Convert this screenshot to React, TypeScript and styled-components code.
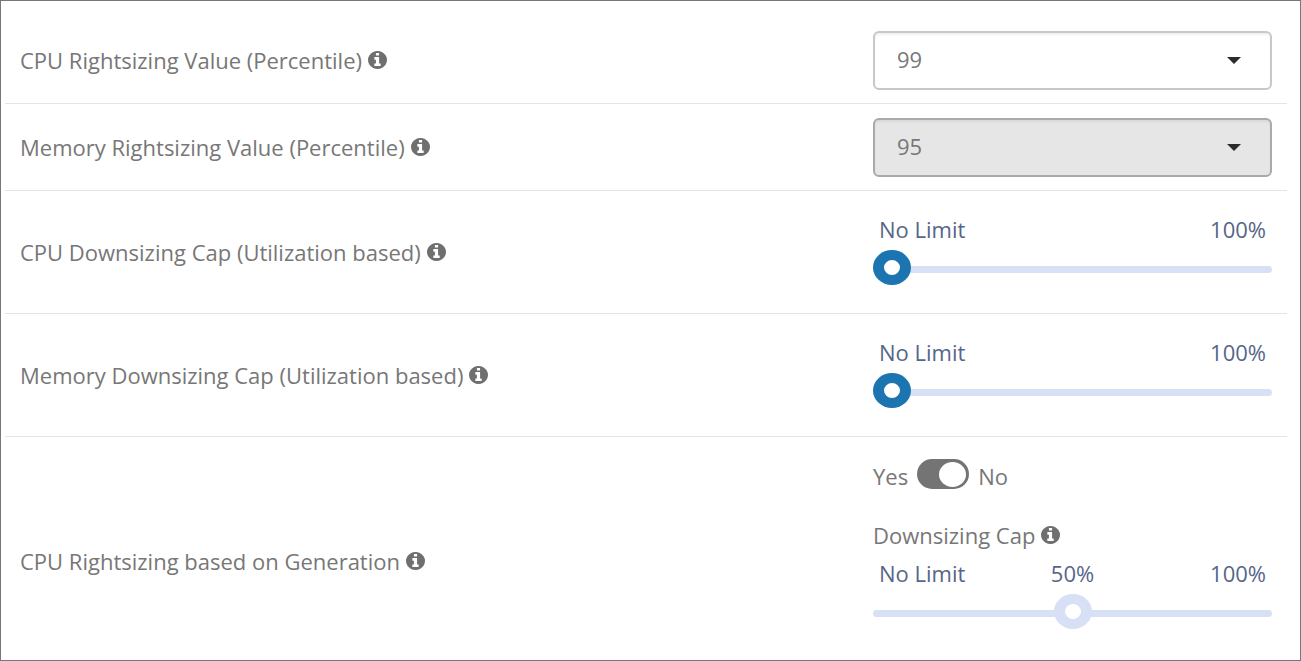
import React, { useState } from "react";
import styled, { createGlobalStyle } from "styled-components";

const GlobalStyle = createGlobalStyle`
  * { box-sizing: border-box; }
  body {
    margin: 0;
    background: #fff;
    color: #777;
    font-family: "Open Sans", "Noto Sans", sans-serif;
    font-size: 22px;
    line-height: 28px;
  }
`;

const Panel = styled.main`
  min-height: 100vh;
  padding: 16px 13px 20px 4px;
  border: 1px solid #777;
`;

const Row = styled.section`
  display: grid;
  grid-template-columns: minmax(0, 1fr) minmax(0, 429px);
  align-items: center;
  border-bottom: 1px solid #e4e4e4;

  &:last-child {
    border-bottom: 0;
  }
`;

const LabelCell = styled.div<{ $low?: boolean }>`
  padding: ${(p) => (p.$low ? "50px 15px 0" : "0 15px")};
`;

const ControlCell = styled.div<{ $kind: "select" | "slider" | "group" }>`
  padding: ${(p) =>
    p.$kind === "select" ? "14px 15px 13px" : p.$kind === "slider" ? "24px 15px 22px" : "22px 15px 0"};
`;

const Caption = styled.div`
  display: flex;
  align-items: center;
  gap: 6px;
`;

const InfoButton = styled.button`
  display: flex;
  padding: 0;
  border: 0;
  background: none;
  color: #6f6f6f;
`;

const InfoIcon = styled.svg`
  width: 19px;
  height: 18px;
  fill: currentColor;
`;

const SelectBox = styled.div`
  display: grid;
  align-items: center;

  > * {
    grid-area: 1 / 1;
  }
`;

const Select = styled.select`
  width: 100%;
  height: 59px;
  padding: 0 60px 4px 22px;
  appearance: none;
  border: 2px solid #c8c8c8;
  border-radius: 6px;
  background: #fff;
  box-shadow: inset 0 2px 2px rgba(0, 0, 0, 0.06);
  color: #777;
  font: inherit;

  &:disabled {
    border-color: #aaa;
    background: #e6e6e6;
    opacity: 1;
  }
`;

const Caret = styled.svg`
  width: 14px;
  height: 7px;
  margin-right: 31px;
  justify-self: end;
  fill: #2b2b2b;
  pointer-events: none;
`;

const Scale = styled.div`
  display: grid;
  grid-template-columns: 1fr auto 1fr;
  padding: 0 6px;
  margin-bottom: 5px;
  color: #56668a;

  > :last-child {
    text-align: right;
  }
`;

const Range = styled.input`
  display: block;
  width: 100%;
  height: 43px;
  margin: 0;
  appearance: none;
  background: none;

  &::-webkit-slider-runnable-track {
    height: 7px;
    border-radius: 4px;
    background: #d7e0f4;
  }

  &::-webkit-slider-thumb {
    width: 38px;
    height: 35px;
    margin-top: -16px;
    appearance: none;
    border: solid #1c75b1;
    border-width: 10px 11px;
    border-radius: 50%;
    background: #fff;
  }

  &:disabled::-webkit-slider-thumb {
    border-color: #d7e0f4;
  }
`;

const SwitchLine = styled.label`
  display: flex;
  align-items: center;
  gap: 9px;
  margin-bottom: 29px;
`;

const Switch = styled.input`
  display: flex;
  align-items: center;
  width: 52px;
  height: 30px;
  margin: 0 0 3px;
  padding: 0 3px;
  appearance: none;
  border-radius: 15px;
  background: #747474;

  &::before {
    content: "";
    width: 27px;
    height: 25px;
    border-radius: 50%;
    background: #fff;
  }

  &:checked {
    justify-content: flex-end;
  }
`;

const CapGroup = styled.div`
  display: grid;
  gap: 10px;
`;

function FieldLabel({ htmlFor, children }: { htmlFor: string; children: string }) {
  return (
    <Caption>
      <label htmlFor={htmlFor}>{children}</label>
      <InfoButton type="button" aria-label={`About ${children}`}>
        <InfoIcon viewBox="0 128 1536 1536" preserveAspectRatio="none" aria-hidden="true">
          <path d="M1024 1376v-160q0-14-9-23t-23-9h-96v-512q0-14-9-23t-23-9h-320q-14 0-23 9t-9 23v160q0 14 9 23t23 9h96v320h-96q-14 0-23 9t-9 23v160q0 14 9 23t23 9h448q14 0 23-9t9-23zm-128-896v-160q0-14-9-23t-23-9h-192q-14 0-23 9t-9 23v160q0 14 9 23t23 9h192q14 0 23-9t9-23zm640 416q0 209-103 385.5t-279.5 279.5-385.5 103-385.5-103-279.5-279.5-103-385.5 103-385.5 279.5-279.5 385.5-103 385.5 103 279.5 279.5 103 385.5z" />
        </InfoIcon>
      </InfoButton>
    </Caption>
  );
}

function SelectRow({ id, label, initial, disabled }: { id: string; label: string; initial: string; disabled?: boolean }) {
  const [value, setValue] = useState(initial);
  return (
    <Row>
      <LabelCell>
        <FieldLabel htmlFor={id}>{label}</FieldLabel>
      </LabelCell>
      <ControlCell $kind="select">
        <SelectBox>
          <Select id={id} value={value} disabled={disabled} onChange={(e) => setValue(e.target.value)}>
            <option>{initial}</option>
          </Select>
          <Caret viewBox="0 0 14 7" aria-hidden="true">
            <path d="M0 0h14L7 7z" />
          </Caret>
        </SelectBox>
      </ControlCell>
    </Row>
  );
}

function CapSlider({ id, initial, disabled }: { id: string; initial: number; disabled?: boolean }) {
  const [value, setValue] = useState(initial);
  return (
    <div>
      <Scale>
        <span>No Limit</span>
        <span>{value > 0 && value < 100 ? `${value}%` : ""}</span>
        <span>100%</span>
      </Scale>
      <Range
        id={id}
        type="range"
        min={0}
        max={100}
        value={value}
        disabled={disabled}
        onChange={(e) => setValue(Number(e.target.value))}
      />
    </div>
  );
}

function SliderRow({ id, label }: { id: string; label: string }) {
  return (
    <Row>
      <LabelCell>
        <FieldLabel htmlFor={id}>{label}</FieldLabel>
      </LabelCell>
      <ControlCell $kind="slider">
        <CapSlider id={id} initial={0} />
      </ControlCell>
    </Row>
  );
}

export default function App() {
  const [off, setOff] = useState(true);
  return (
    <>
      <GlobalStyle />
      <Panel>
        <SelectRow id="cpu-value" label="CPU Rightsizing Value (Percentile)" initial="99" />
        <SelectRow id="memory-value" label="Memory Rightsizing Value (Percentile)" initial="95" disabled />
        <SliderRow id="cpu-cap" label="CPU Downsizing Cap (Utilization based)" />
        <SliderRow id="memory-cap" label="Memory Downsizing Cap (Utilization based)" />
        <Row>
          <LabelCell $low>
            <FieldLabel htmlFor="generation">CPU Rightsizing based on Generation</FieldLabel>
          </LabelCell>
          <ControlCell $kind="group">
            <SwitchLine>
              Yes
              <Switch id="generation" type="checkbox" role="switch" checked={off} onChange={(e) => setOff(e.target.checked)} />
              No
            </SwitchLine>
            <CapGroup>
              <FieldLabel htmlFor="generation-cap">Downsizing Cap</FieldLabel>
              <CapSlider id="generation-cap" initial={50} disabled={off} />
            </CapGroup>
          </ControlCell>
        </Row>
      </Panel>
    </>
  );
}
